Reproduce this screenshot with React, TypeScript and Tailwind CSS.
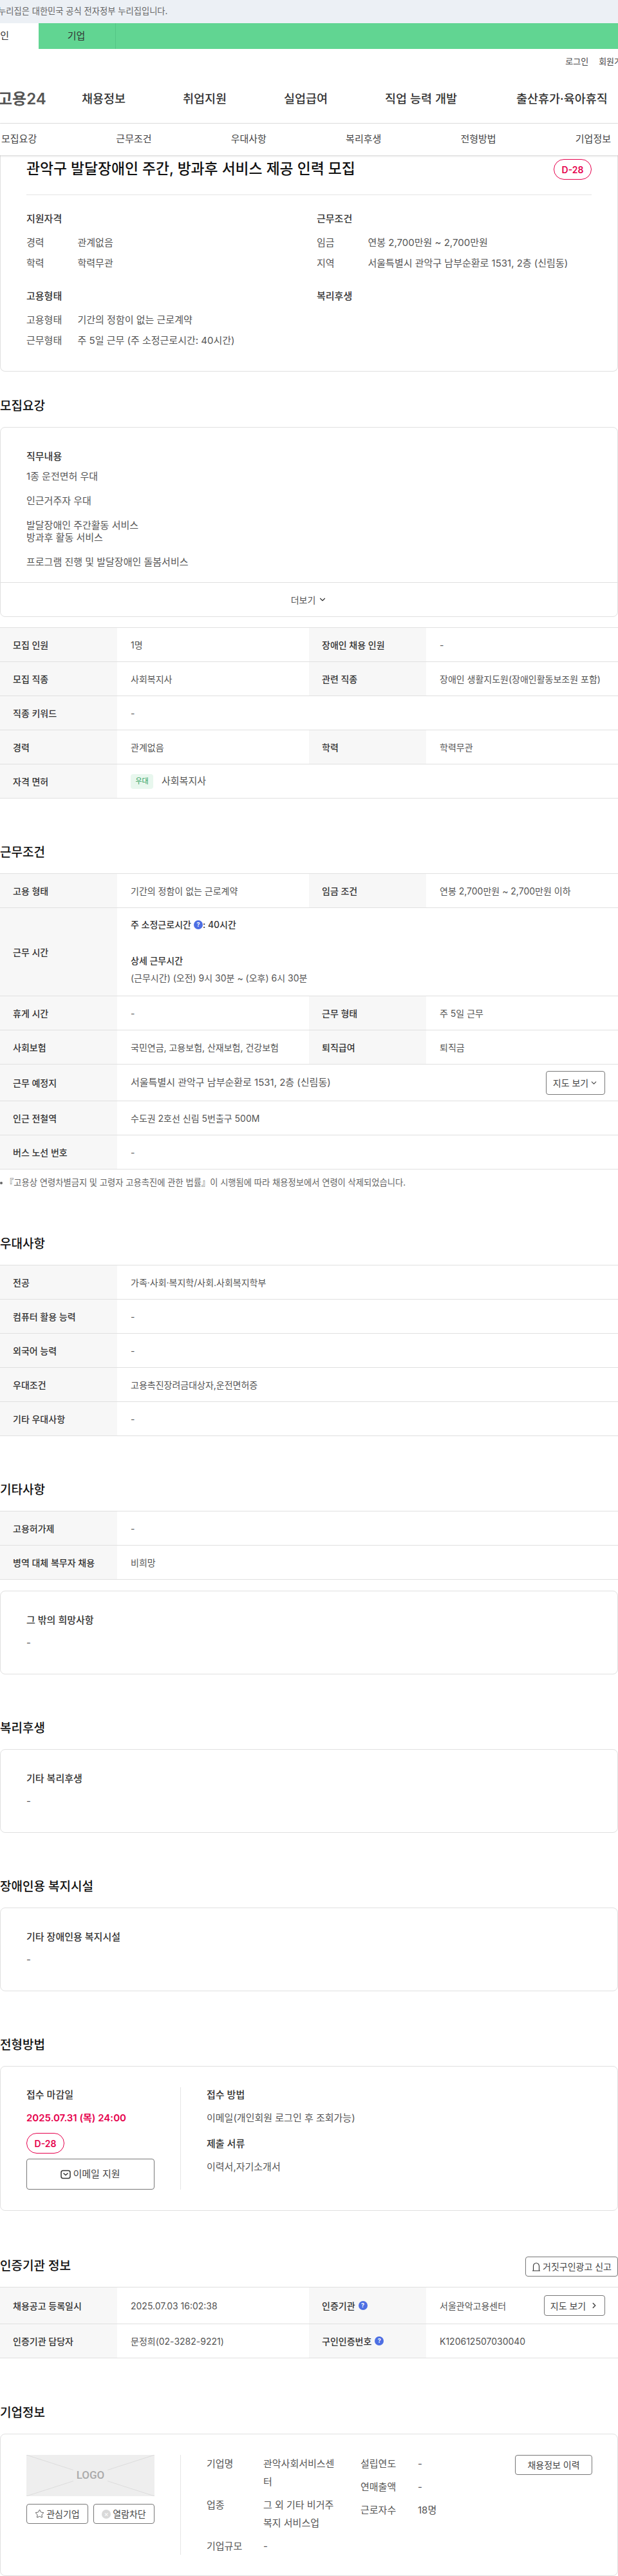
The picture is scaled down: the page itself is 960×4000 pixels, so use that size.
import { ChevronDown, ChevronRight, Star } from "lucide-react"
import type { ReactNode } from "react"

function Help() {
    return (
        <span className="inline-flex w-[14px] h-[14px] rounded-full bg-[#4d6fe3] text-white text-[9px] font-bold items-center justify-center align-middle">?</span>
    )
}

function Badge() {
    return (
        <span className="flex items-center justify-center w-[59px] h-[32px] border border-[#e6004d] rounded-[16px] text-[#e6004d] text-[14px] font-semibold">D-28</span>
    )
}

function Heading({ children }: { children: ReactNode }) {
    return <h2 className="h-[28px] mb-[18px] text-[19px] leading-[28px] font-medium text-[#111] whitespace-nowrap">{children}</h2>
}

function Row({ label, value, label2, value2, h = "h-[53px]" }: { label: string, value: ReactNode, label2?: ReactNode, value2?: ReactNode, h?: string }) {
    return (
        <div className={`flex border-b border-[#e0e0e0] text-[14px] ${h}`}>
            <div className="w-[182px] shrink-0 bg-[#f7f7f7] pl-[20px] flex items-center font-medium text-[#333]">{label}</div>
            {label2 ? (
                <>
                    <div className="w-[298px] shrink-0 pl-[21px] flex items-center text-[#555]">{value}</div>
                    <div className="w-[182px] shrink-0 bg-[#f7f7f7] pl-[20px] flex items-center gap-[5px] font-medium text-[#333]">{label2}</div>
                    <div className="flex-1 pl-[21px] pr-[20px] flex items-center justify-between text-[#555] whitespace-nowrap">{value2}</div>
                </>
            ) : (
                <div className="flex-1 pl-[21px] pr-[20px] flex items-center justify-between text-[#555]">{value}</div>
            )}
        </div>
    )
}

function Plain({ title }: { title: string }) {
    return (
        <div className="h-[130px] border border-[#e0e0e0] rounded-[8px] px-[40px] pt-[33px]">
            <div className="text-[15px] leading-[24px] font-medium text-[#333]">{title}</div>
            <div className="mt-[11px] text-[15px] leading-[24px] text-[#555]">-</div>
        </div>
    )
}

function Summary({ label, value }: { label: string, value: string }) {
    return (
        <div className="flex h-[32px] items-center text-[15px] text-[#555] whitespace-nowrap">
            <span className="w-[79.5px]">{label}</span>
            <span>{value}</span>
        </div>
    )
}

export default function App() {
    return (
        <div className="w-[960px] overflow-hidden bg-white font-['Inter','Noto_Sans_CJK_KR',sans-serif] text-[#333]">
            <div className="h-[36px] bg-[#ecf0f5] flex items-center text-[13.3px] text-[#666] whitespace-nowrap">
                <span className="-ml-[19px]">이 누리집은 대한민국 공식 전자정부 누리집입니다.</span>
            </div>
            <div className="h-[40px] bg-[#61d592] flex text-[15px] text-[#333]">
                <div className="w-[60px] bg-white flex items-center justify-end pr-[46px] whitespace-nowrap">개인</div>
                <div className="w-[120px] border-r border-[#55c585] flex items-center justify-center pr-[2px]">기업</div>
            </div>
            <div className="h-[40px] flex justify-end items-center gap-[16px] text-[13px] text-[#444] whitespace-nowrap -mr-[18px]">
                <span>로그인</span>
                <span>회원가입</span>
            </div>
            <div className="h-[76px] border-b border-[#e5e5e5] flex items-center whitespace-nowrap text-[18.5px] font-medium text-[#333]">
                <span className="-ml-[3px] w-[130px] text-[24px] font-semibold text-[#555]">고용24</span>
                <span className="w-[157px]">채용정보</span>
                <span className="w-[157px]">취업지원</span>
                <span className="w-[157px]">실업급여</span>
                <span className="w-[204px]">직업 능력 개발</span>
                <span>출산휴가·육아휴직</span>
            </div>
            <div className="h-[49px] flex items-center justify-between pl-[2px] pr-[11px] text-[15px] text-[#444] whitespace-nowrap shadow-[0_1px_3px_rgba(0,0,0,0.2)] relative">
                <span>모집요강</span>
                <span>근무조건</span>
                <span>우대사항</span>
                <span>복리후생</span>
                <span>전형방법</span>
                <span>기업정보</span>
            </div>

            <div className="h-[336px] border-x border-b border-[#e0e0e0] rounded-b-[8px] px-[40px]">
                <div className="h-[62px] border-b border-[#e5e5e5] flex justify-between pt-[6px]">
                    <h1 className="text-[22.8px] leading-[30px] font-medium text-[#111] whitespace-nowrap">관악구 발달장애인 주간, 방과후 서비스 제공 인력 모집</h1>
                    <Badge />
                </div>
                <div className="grid grid-cols-[451px_1fr] pt-[25px]">
                    <div>
                        <div className="h-[24px] leading-[24px] text-[15px] font-medium text-[#333] mb-[9px]">지원자격</div>
                        <Summary label="경력" value="관계없음" />
                        <Summary label="학력" value="학력무관" />
                    </div>
                    <div>
                        <div className="h-[24px] leading-[24px] text-[15px] font-medium text-[#333] mb-[9px]">근무조건</div>
                        <Summary label="임금" value="연봉 2,700만원 ~ 2,700만원" />
                        <Summary label="지역" value="서울특별시 관악구 남부순환로 1531, 2층 (신림동)" />
                    </div>
                    <div className="mt-[23px]">
                        <div className="h-[24px] leading-[24px] text-[15px] font-medium text-[#333] mb-[9px]">고용형태</div>
                        <Summary label="고용형태" value="기간의 정함이 없는 근로계약" />
                        <Summary label="근무형태" value="주 5일 근무 (주 소정근로시간: 40시간)" />
                    </div>
                    <div className="mt-[23px]">
                        <div className="h-[24px] leading-[24px] text-[15px] font-medium text-[#333] mb-[9px]">복리후생</div>
                    </div>
                </div>
            </div>

            <section className="mt-[40px]">
                <Heading>모집요강</Heading>
                <div className="h-[295px] border border-[#e0e0e0] rounded-[8px] flex flex-col">
                    <div className="flex-1 px-[40px] pt-[33px] text-[15px] leading-[19px] text-[#555]">
                        <div className="leading-[24px] font-medium text-[#333] mb-[9px]">직무내용</div>
                        <p className="mb-[19px]">1종 운전면허 우대</p>
                        <p className="mb-[19px]">인근거주자 우대</p>
                        <p className="mb-[19px]">발달장애인 주간활동 서비스<br />방과후 활동 서비스</p>
                        <p>프로그램 진행 및 발달장애인 돌봄서비스</p>
                    </div>
                    <div className="h-[53px] border-t border-[#e0e0e0] flex items-center justify-center gap-[4px] text-[14px] text-[#555]">
                        더보기 <ChevronDown size={14} strokeWidth={2} className="text-[#333]" />
                    </div>
                </div>
                <div className="mt-[16px] border-t border-[#e0e0e0]">
                    <Row label="모집 인원" value="1명" label2="장애인 채용 인원" value2="-" />
                    <Row label="모집 직종" value="사회복지사" label2="관련 직종" value2="장애인 생활지도원(장애인활동보조원 포함)" />
                    <Row label="직종 키워드" value="-" />
                    <Row label="경력" value="관계없음" label2="학력" value2="학력무관" />
                    <Row label="자격 면허" value={
                        <span className="flex items-center gap-[13px] text-[15px]">
                            <span className="w-[35px] h-[23px] bg-[#e8f7ee] rounded-[4px] text-[#2e9e5b] text-[11px] flex items-center justify-center">우대</span>
                            사회복지사
                        </span>
                    } />
                </div>
            </section>

            <section className="mt-[70px]">
                <Heading>근무조건</Heading>
                <div className="border-t border-[#e0e0e0]">
                    <Row label="고용 형태" value="기간의 정함이 없는 근로계약" label2="임금 조건" value2="연봉 2,700만원 ~ 2,700만원 이하" />
                    <Row h="h-[137px]" label="근무 시간" value={
                        <div className="flex flex-col h-full pt-[14px]">
                            <div className="h-[24px] leading-[24px] font-medium text-[#333] flex items-center gap-[4px]">주 소정근로시간 <Help /><span className="-ml-[4px]">: 40시간</span></div>
                            <div className="mt-[32px] h-[24px] leading-[24px] font-medium text-[#333]">상세 근무시간</div>
                            <div className="mt-[3px] h-[24px] leading-[24px]">(근무시간) (오전) 9시 30분 ~ (오후) 6시 30분</div>
                        </div>
                    } />
                    <Row label="휴게 시간" value="-" label2="근무 형태" value2="주 5일 근무" />
                    <Row label="사회보험" value="국민연금, 고용보험, 산재보험, 건강보험" label2="퇴직급여" value2="퇴직금" />
                    <Row h="h-[57px]" label="근무 예정지" value={
                        <>
                            <span className="text-[15px]">서울특별시 관악구 남부순환로 1531, 2층 (신림동)</span>
                            <span className="w-[92px] h-[37px] border border-[#777] rounded-[4px] flex items-center justify-center gap-[2px] text-[14px] text-[#444]">
                                지도 보기 <ChevronDown size={13} />
                            </span>
                        </>
                    } />
                    <Row label="인근 전철역" value="수도권 2호선 신림 5번출구 500M" />
                    <Row label="버스 노선 번호" value="-" />
                </div>
                <div className="h-[41px] flex items-center gap-[4px] text-[13.3px] text-[#666] whitespace-nowrap">
                    <span className="w-[4px] h-[4px] rounded-full bg-[#666]"></span>
                    『고용상 연령차별금지 및 고령자 고용촉진에 관한 법률』이 시행됨에 따라 채용정보에서 연령이 삭제되었습니다.
                </div>
            </section>

            <section className="mt-[61px]">
                <Heading>우대사항</Heading>
                <div className="border-t border-[#e0e0e0]">
                    <Row label="전공" value="가족·사회·복지학/사회.사회복지학부" />
                    <Row label="컴퓨터 활용 능력" value="-" />
                    <Row label="외국어 능력" value="-" />
                    <Row label="우대조건" value="고용촉진장려금대상자,운전면허증" />
                    <Row label="기타 우대사항" value="-" />
                </div>
            </section>

            <section className="mt-[70px]">
                <Heading>기타사항</Heading>
                <div className="border-t border-[#e0e0e0]">
                    <Row label="고용허가제" value="-" />
                    <Row label="병역 대체 복무자 채용" value="비희망" />
                </div>
                <div className="mt-[17px]"><Plain title="그 밖의 희망사항" /></div>
            </section>

            <section className="mt-[70px]">
                <Heading>복리후생</Heading>
                <Plain title="기타 복리후생" />
            </section>

            <section className="mt-[70px]">
                <Heading>장애인용 복지시설</Heading>
                <Plain title="기타 장애인용 복지시설" />
            </section>

            <section className="mt-[70px]">
                <Heading>전형방법</Heading>
                <div className="h-[225px] border border-[#e0e0e0] rounded-[8px] px-[40px] pt-[32px] flex">
                    <div className="w-[240px] h-[159px] border-r border-[#e5e5e5] pr-[40px]">
                        <div className="h-[24px] leading-[24px] text-[15px] font-medium text-[#333]">접수 마감일</div>
                        <div className="mt-[12px] h-[24px] leading-[24px] text-[15px] font-semibold text-[#e6004d] whitespace-nowrap">2025.07.31 (목) 24:00</div>
                        <div className="mt-[11px]"><Badge /></div>
                        <div className="mt-[8px] h-[48px] border border-[#777] rounded-[4px] flex items-center justify-center gap-[3px] text-[15px] text-[#444]">
                            <svg width="16" height="15" viewBox="0 0 16 15" fill="none" stroke="#333" strokeWidth="1.5"><rect x="1" y="1.5" width="14" height="12" rx="3" /><path d="M4.5 5.5l3.5 3 3.5-3" /></svg>
                            이메일 지원
                        </div>
                    </div>
                    <div className="pl-[40px] text-[15px] leading-[24px] text-[#555]">
                        <div className="font-medium text-[#333]">접수 방법</div>
                        <div className="mt-[12px]">이메일(개인회원 로그인 후 조회가능)</div>
                        <div className="mt-[16px] font-medium text-[#333]">제출 서류</div>
                        <div className="mt-[12px]">이력서,자기소개서</div>
                    </div>
                </div>
            </section>

            <section className="mt-[71px]">
                <div className="flex justify-between items-center h-[31px] mb-[16px]">
                    <h2 className="text-[19px] font-medium text-[#111]">인증기관 정보</h2>
                    <span className="w-[144px] h-[31px] border border-[#777] rounded-[4px] flex items-center justify-center gap-[3px] text-[14px] text-[#444] whitespace-nowrap">
                        <svg width="14" height="14" viewBox="0 0 14 14" fill="none" stroke="#333" strokeWidth="1.1"><path d="M2.5 13V6a4.5 5 0 019 0v7M1 13h12" /></svg>
                        거짓구인광고 신고
                    </span>
                </div>
                <div className="border-t border-[#e0e0e0]">
                    <Row h="h-[57px]" label="채용공고 등록일시" value="2025.07.03 16:02:38" label2={<>인증기관 <Help /></>} value2={
                        <>
                            서울관악고용센터
                            <span className="w-[95px] h-[32px] border border-[#777] rounded-[4px] flex items-center justify-center gap-[6px] text-[14px] text-[#444]">
                                지도 보기 <ChevronRight size={14} strokeWidth={2.5} />
                            </span>
                        </>
                    } />
                    <Row label="인증기관 담당자" value="문정희(02-3282-9221)" label2={<>구인인증번호 <Help /></>} value2="K120612507030040" />
                </div>
            </section>

            <section className="mt-[71px]">
                <Heading>기업정보</Heading>
                <div className="h-[221px] border border-[#e0e0e0] rounded-[8px] px-[40px] pt-[32px] flex">
                    <div className="w-[240px] h-[155px] border-r border-[#e5e5e5] pr-[40px]">
                        <div className="h-[64px] bg-[#eeeeee] relative overflow-hidden flex items-center justify-center">
                            <svg className="absolute inset-0" width="199" height="64" viewBox="0 0 199 64" stroke="#dcdcdc"><path d="M0 0l199 64M199 0L0 64" /></svg>
                            <span className="relative bg-[#eeeeee] px-[5px] text-[17px] font-medium font-['Roboto',sans-serif] text-[#aaa]">LOGO</span>
                        </div>
                        <div className="mt-[12px] flex gap-[8px] text-[14px] text-[#444]">
                            <span className="w-[96px] h-[31px] border border-[#777] rounded-[4px] flex items-center justify-center gap-[3px]">
                                <Star size={15} strokeWidth={1.4} /> 관심기업
                            </span>
                            <span className="w-[95px] h-[31px] border border-[#777] rounded-[4px] flex items-center justify-center gap-[3px]">
                                <span className="w-[14px] h-[14px] rounded-full bg-[#d9d9d9] text-white text-[11px] leading-[14px] text-center">×</span> 열람차단
                            </span>
                        </div>
                    </div>
                    <div className="flex-1 pl-[40px] flex text-[15px] text-[#555] leading-[28px]">
                        <div className="w-[239px] grid grid-cols-[88px_111px] content-start gap-y-[8px]">
                            <span>기업명</span><span>관악사회서비스센터</span>
                            <span>업종</span><span>그 외 기타 비거주복지 서비스업</span>
                            <span>기업규모</span><span>-</span>
                        </div>
                        <div className="w-[240px] grid grid-cols-[89px_1fr] content-start gap-y-[8px]">
                            <span>설립연도</span><span>-</span>
                            <span>연매출액</span><span>-</span>
                            <span>근로자수</span><span>18명</span>
                        </div>
                        <span className="w-[120px] h-[31px] border border-[#777] rounded-[4px] flex items-center justify-center text-[14px] text-[#444] whitespace-nowrap">채용정보 이력</span>
                    </div>
                </div>
            </section>
        </div>
    )
}
